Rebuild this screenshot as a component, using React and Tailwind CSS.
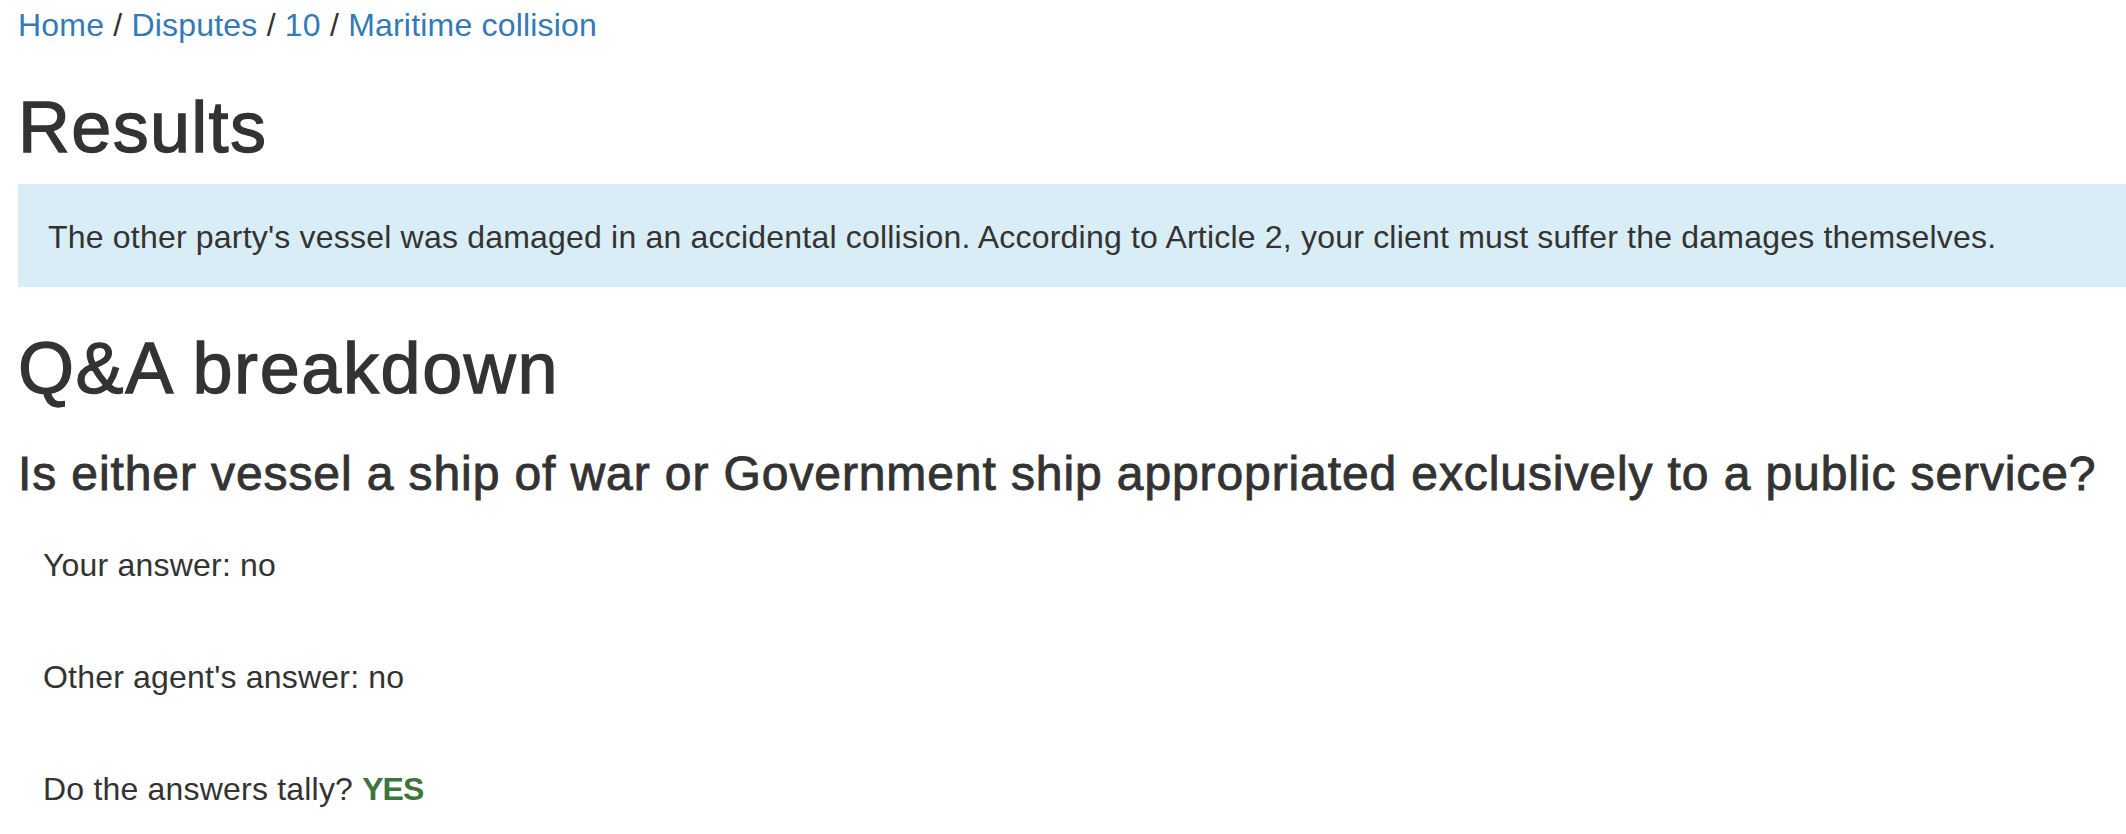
const crumbs = ['Home', 'Disputes', '10', 'Maritime collision'];

const answers = [
  { label: 'Your answer:', value: 'no' },
  { label: "Other agent's answer:", value: 'no' },
];

export default function App() {
  return (
    <div className="h-[834px] w-full overflow-hidden bg-white font-['Liberation_Sans',Arial,sans-serif] text-[#333] tracking-[0.2px]">
      <div className="pl-[18px]">
        {/* breadcrumb */}
        <div className="pt-[2px] text-[32px] leading-[46px]">
          {crumbs.map((c, i) => (
            <span key={c}>
              <a href="#" className="text-[#337ab7]">{c}</a>
              {i < crumbs.length - 1 && <span> / </span>}
            </span>
          ))}
        </div>

        <h1 className="mt-[40px] text-[72px] leading-[79px] tracking-[1.3px] [-webkit-text-stroke:1.3px_#333]">Results</h1>

        <div className="mt-[17px] bg-[#d9edf7] pl-[30px] pt-[30px] pb-[27px] text-[32px] leading-[46px] whitespace-nowrap">
          The other party's vessel was damaged in an accidental collision. According to Article 2, your client must suffer the damages themselves.
        </div>

        <h1 className="mt-[42px] text-[72px] leading-[79px] tracking-[1.6px] [-webkit-text-stroke:1.3px_#333]">Q&amp;A breakdown</h1>

        <h3 className="mt-[39px] text-[48px] leading-[53px] tracking-[0.9px] [-webkit-text-stroke:0.9px_#333] whitespace-nowrap">
          Is either vessel a ship of war or Government ship appropriated exclusively to a public service?
        </h3>

        <div className="mt-[42px] pl-[25px] flex flex-col gap-[66px] text-[32px] leading-[46px]">
          {answers.map((a) => (
            <p key={a.label}>{a.label} {a.value}</p>
          ))}
          <p>
            Do the answers tally? <span className="font-bold tracking-[-1px] text-[#3c763d]">YES</span>
          </p>
        </div>
      </div>
    </div>
  );
}
